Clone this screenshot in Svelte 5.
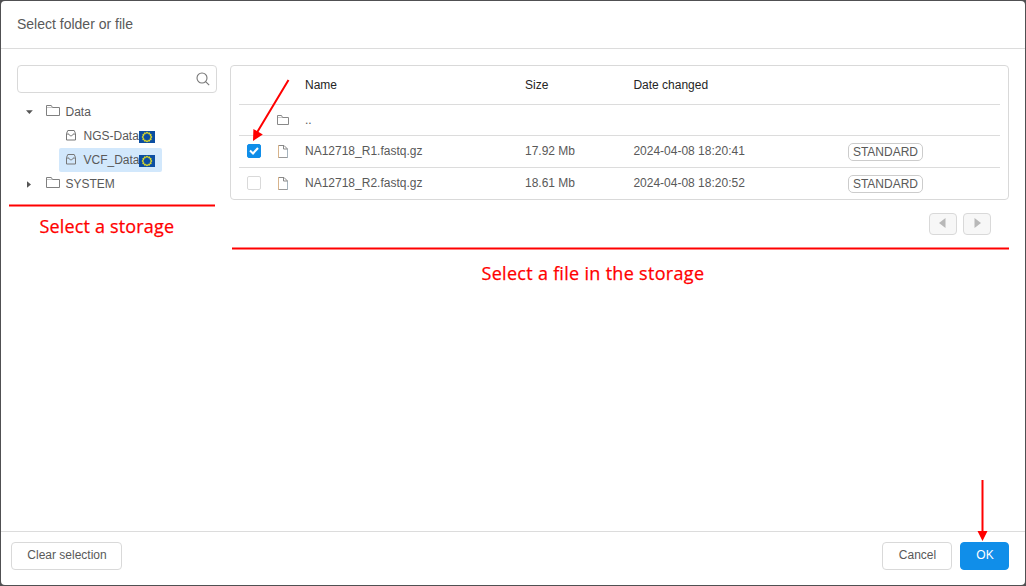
<script>
  const storages = ['NGS-Data', 'VCF_Data'];
  const files = [
    { name: 'NA12718_R1.fastq.gz', size: '17.92 Mb', date: '2024-04-08 18:20:41', checked: true },
    { name: 'NA12718_R2.fastq.gz', size: '18.61 Mb', date: '2024-04-08 18:20:52', checked: false }
  ];
  const stars = Array.from({ length: 12 }, (_, i) => i * 30);
</script>

{#snippet folder(w, h)}
  <svg class="icon" width={w} height={h} viewBox="0 0 {w} {h}" fill="none" stroke="currentColor">
    <path d="M.5 {h - 0.5}V.5H{w * 0.38}L{w * 0.46} 2.5H{w - 0.5}V{h - 0.5}z" />
    <path d="M1 2.5H{w * 0.46}" opacity=".45" />
  </svg>
{/snippet}

<div class="backdrop">
  <div class="dialog">
    <header>Select folder or file</header>
    <main>
      <aside>
        <div class="search">
          <svg width="14" height="14" viewBox="0 0 14 14" fill="none" stroke="#777" stroke-width="1.1">
            <circle cx="6" cy="6" r="5" /><path d="M9.6 9.6L13.2 13.2" />
          </svg>
        </div>
        <div class="tree">
          <div class="node">
            <svg class="caret" width="7" height="7" viewBox="0 0 7 7"><path d="M0 1.2h6.8L3.4 5z" fill="#555" /></svg>
            <span class="glyph">{@render folder(14, 11)}</span><span class="label">Data</span>
          </div>
          {#each storages as s, i}
            <div class="leaf" class:selected={i === 1}>
              <svg class="disk" width="11" height="11" viewBox="0 0 11 11" fill="none" stroke="#777">
                <path d="M.5 3.5L1.8 .5h6.4l1.3 3v6.5H.5z" />
                <path d="M.5 4h2.4c.2 2.4 4 2.4 4.2 0h2.4" />
              </svg>
              <span>{s}</span>
              <svg class="flag" width="16" height="12" viewBox="0 0 16 12">
                <rect width="16" height="12" fill="#0b4ea2" />
                {#each stars as a}
                  <circle cx="8" cy="1.8" r="1.05" fill="#d9d82c" transform="rotate({a} 8 6)" />
                {/each}
              </svg>
            </div>
          {/each}
          <div class="node">
            <svg class="caret" width="7" height="7" viewBox="0 0 7 7"><path d="M1 .2v6.6L5 3.5z" fill="#555" /></svg>
            <span class="glyph">{@render folder(14, 11)}</span><span class="label">SYSTEM</span>
          </div>
        </div>
      </aside>
      <section>
        <div class="table">
          <div class="row head"><span></span><span></span><span>Name</span><span>Size</span><span>Date changed</span><span></span></div>
          <div class="row up"><span></span><span class="cellicon">{@render folder(12, 10)}</span><span>..</span></div>
          {#each files as f}
            <div class="row file">
              <span class="box" class:checked={f.checked}>
                {#if f.checked}
                  <svg width="10" height="8" viewBox="0 0 10 8" fill="none" stroke="#fff" stroke-width="2.1"><path d="M1 3.6L4 6.4L9 1" /></svg>
                {/if}
              </span>
              <span class="cellicon doc">
                <svg width="10" height="13" viewBox="0 0 10 13" fill="none" stroke-width="1">
                  <path d="M.5 0V13" stroke="#d8b48c" /><path d="M1 12.5H9" stroke="#999" /><path d="M9.5 13V4" stroke="#a5b3bd" /><path d="M1 .5H6L9.5 4H5.5V.5" stroke="#888" />
                </svg>
              </span>
              <span>{f.name}</span><span>{f.size}</span><span>{f.date}</span><span><b class="tag">STANDARD</b></span>
            </div>
          {/each}
        </div>
        <div class="pager">
          <button aria-label="Previous"><svg width="8" height="10" viewBox="0 0 8 10"><path d="M6.5 0v10L0 5z" fill="#b8b8b8" /></svg></button>
          <button aria-label="Next"><svg width="8" height="10" viewBox="0 0 8 10"><path d="M1.5 0v10L8 5z" fill="#b8b8b8" /></svg></button>
        </div>
      </section>
    </main>
    <footer>
      <button class="clear">Clear selection</button>
      <button class="cancel">Cancel</button>
      <button class="ok">OK</button>
    </footer>
  </div>
  <svg class="notes" width="1026" height="586" viewBox="0 0 1026 586" stroke="#f00" fill="#f00">
    <path d="M9 205.5H215M232 248.5H1009M982.5 480V533M288.5 80L257 132.5" stroke-width="2" />
    <path d="M977.5 531h10l-5 10zM253 141l.4-12 9.4 5.6z" stroke="none" />
    <text x="39.5" y="233" textLength="134.5">Select a storage</text>
    <text x="481.5" y="280" textLength="222.5">Select a file in the storage</text>
  </svg>
</div>

<style>
  :global(body) { margin: 0; background: #505052; }
  .backdrop { position: relative; box-sizing: border-box; width: 1026px; height: 586px; padding: 1px; background: #505052; font: 12px/24px "Liberation Sans", Arial, sans-serif; color: #595959; overflow: hidden; }
  .dialog { display: flex; flex-direction: column; height: 584px; background: #fff; border-radius: 4px; overflow: hidden; }
  header { box-sizing: border-box; height: 48px; padding: 11px 16px; border-bottom: 1px solid #dcdcdc; font-size: 14px; }
  main { display: flex; flex: 1; gap: 13px; padding: 16px 16px 0; }
  aside { width: 200px; }
  .search { box-sizing: border-box; height: 28px; border: 1px solid #d9d9d9; border-radius: 4px; display: flex; align-items: center; justify-content: flex-end; padding-right: 6px; }
  .tree { padding-top: 7px; }
  .node { height: 24px; display: flex; align-items: center; }
  .caret { margin: 0 13.5px 0 8.5px; }
  .glyph { display: flex; width: 19.5px; padding-bottom: 3px; color: #808080; }
  .icon { display: block; }
  .leaf { box-sizing: border-box; display: flex; align-items: center; height: 24px; width: 103px; margin-left: 42px; padding-left: 7px; border-radius: 2px; }
  .selected { background: #d2e8fc; }
  .disk { margin: 0 6.5px 1px 0; }
  .flag { margin-top: 1px; }
  .leaf span { width: 55.5px; white-space: nowrap; }
  section { width: 779px; flex: none; }
  .table { box-sizing: border-box; height: 135px; padding: 0 8px; border: 1px solid #d9d9d9; border-radius: 4px; }
  .row { box-sizing: border-box; display: grid; grid-template-columns: 38px 28px 220px 108.4px 214.6px 1fr; align-items: center; height: 32px; border-bottom: 1px solid #dcdcdc; }
  .row:last-child { border-color: transparent; }
  .file { padding-bottom: 1px; }
  .head { height: 39px; color: #252525; }
  .up { height: 31px; }
  .cellicon { display: flex; color: #888; }
  .doc { padding: 1px 0 0 1px; }
  .box { box-sizing: border-box; display: flex; align-items: center; justify-content: center; width: 14px; height: 14px; margin-left: 8px; border: 1px solid #d9d9d9; border-radius: 2px; }
  .checked { background: #108ee9; border-color: #108ee9; }
  .tag { display: block; box-sizing: border-box; width: 75px; height: 18px; margin-top: 2px; border: 1px solid #ccc; border-radius: 5px; font-weight: 400; line-height: 16px; text-align: center; }
  button { box-sizing: border-box; height: 28px; padding: 0; border: 1px solid #d9d9d9; border-radius: 4px; background: #fff; color: inherit; font: inherit; line-height: 25px; display: flex; justify-content: center; }
  .pager { display: flex; justify-content: flex-end; gap: 6px; padding: 13px 18px 0; }
  .pager button { width: 28px; height: 22px; padding-bottom: 2px; align-items: center; background: #f7f7f7; }
  footer { box-sizing: border-box; height: 54px; border-top: 1px solid #dcdcdc; display: flex; gap: 8px; padding: 10px 16px 0 10px; }
  .clear { width: 111px; margin-right: auto; padding-left: 1px; }
  .cancel { width: 70px; padding-left: 1px; }
  .ok { width: 49px; padding-left: 1px; background: #108ee9; border-color: #108ee9; color: #fff; }
  .notes { position: absolute; inset: 0; }
  .notes text { font: 500 18px "Open Sans", sans-serif; stroke: #f00; stroke-width: .25px; }
</style>
